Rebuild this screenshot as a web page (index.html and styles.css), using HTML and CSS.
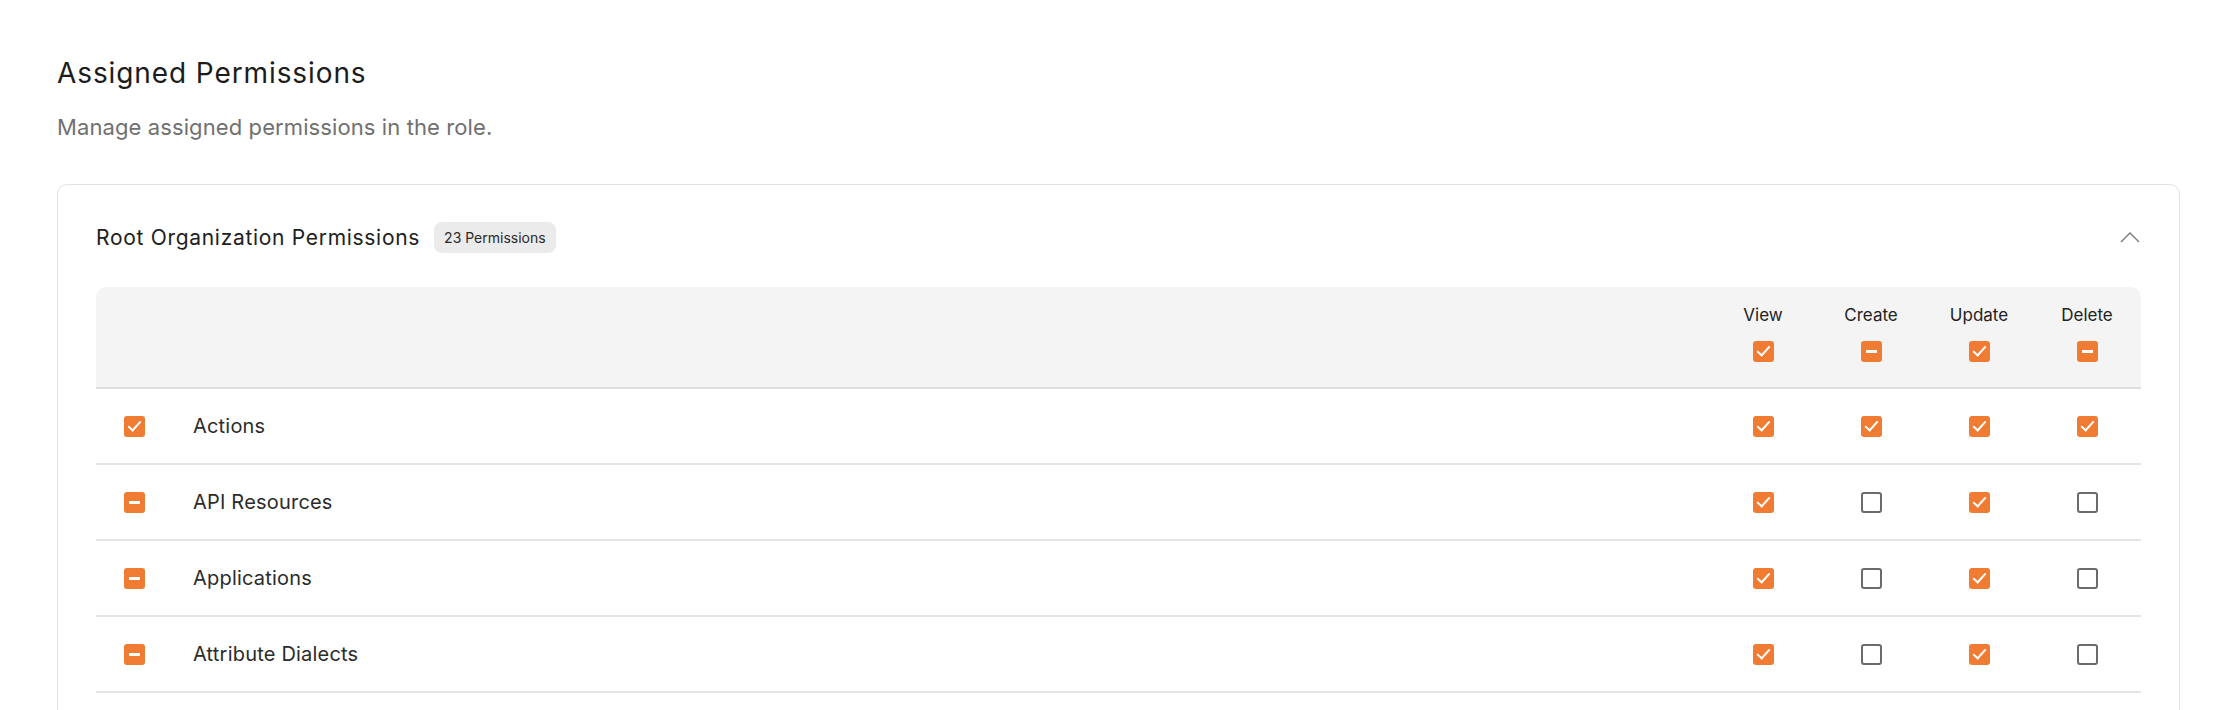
FILE: index.html
```html
<!DOCTYPE html>
<html lang="en">
<head>
<meta charset="utf-8">
<title>Assigned Permissions</title>
<link rel="stylesheet" href="styles.css">
</head>
<body>
<div class="page">
  <h1 class="title">Assigned Permissions</h1>
  <p class="subtitle">Manage assigned permissions in the role.</p>

  <section class="card">
    <div class="card-head">
      <div class="card-title">
        <span>Root Organization Permissions</span>
        <span class="badge">23 Permissions</span>
      </div>
      <svg class="chevron" width="20" height="12" viewBox="0 0 20 12"><path d="M1 11 L10 2 L19 11" fill="none" stroke="#777" stroke-width="1.3"/></svg>
    </div>

    <div class="table">
      <div class="thead">
        <div class="cell-select"></div>
        <div class="cell-name"></div>
        <div class="cell-col"><span class="col-label">View</span><span class="cb checked"></span></div>
        <div class="cell-col"><span class="col-label">Create</span><span class="cb partial"></span></div>
        <div class="cell-col"><span class="col-label">Update</span><span class="cb checked"></span></div>
        <div class="cell-col"><span class="col-label">Delete</span><span class="cb partial"></span></div>
      </div>

      <div class="row">
        <div class="cell-select"><span class="cb checked"></span></div>
        <div class="cell-name">Actions</div>
        <div class="cell-col"><span class="cb checked"></span></div>
        <div class="cell-col"><span class="cb checked"></span></div>
        <div class="cell-col"><span class="cb checked"></span></div>
        <div class="cell-col"><span class="cb checked"></span></div>
      </div>
      <div class="row">
        <div class="cell-select"><span class="cb partial"></span></div>
        <div class="cell-name">API Resources</div>
        <div class="cell-col"><span class="cb checked"></span></div>
        <div class="cell-col"><span class="cb"></span></div>
        <div class="cell-col"><span class="cb checked"></span></div>
        <div class="cell-col"><span class="cb"></span></div>
      </div>
      <div class="row">
        <div class="cell-select"><span class="cb partial"></span></div>
        <div class="cell-name">Applications</div>
        <div class="cell-col"><span class="cb checked"></span></div>
        <div class="cell-col"><span class="cb"></span></div>
        <div class="cell-col"><span class="cb checked"></span></div>
        <div class="cell-col"><span class="cb"></span></div>
      </div>
      <div class="row">
        <div class="cell-select"><span class="cb partial"></span></div>
        <div class="cell-name">Attribute Dialects</div>
        <div class="cell-col"><span class="cb checked"></span></div>
        <div class="cell-col"><span class="cb"></span></div>
        <div class="cell-col"><span class="cb checked"></span></div>
        <div class="cell-col"><span class="cb"></span></div>
      </div>
    </div>
  </section>
</div>
</body>
</html>
```

FILE: styles.css
```css
* { box-sizing: border-box; }
html, body { margin: 0; padding: 0; background: #fff; }
body {
  font-family: Inter, "Noto Sans", "Liberation Sans", sans-serif;
  color: #1f1f1f;
}
.page {
  height: 100vh;
  overflow: hidden;
  padding: 53px 57px 0;
}
.title {
  margin: 0;
  font-size: 28px;
  font-weight: 400;
  line-height: 40px;
  color: #1c1c1c;
  letter-spacing: 0.9px;
}
.subtitle {
  margin: 19px 0 0;
  font-size: 22px;
  line-height: 30px;
  color: #707070;
  letter-spacing: 0.1px;
}
.card {
  margin-top: 42px;
  border: 1px solid #e2e2e2;
  border-radius: 10px;
  padding: 0 38px 60px;
}
.card-head {
  height: 102px;
  display: flex;
  align-items: center;
  justify-content: space-between;
  padding-top: 2px;
}
.card-title {
  display: flex;
  align-items: center;
  gap: 14px;
  font-size: 21px;
  color: #202020;
  letter-spacing: 0.7px;
}
.badge {
  display: inline-flex;
  align-items: center;
  height: 31px;
  padding: 0 10px;
  border-radius: 8px;
  background: #ebebeb;
  font-size: 14px;
  color: #2a2a2a;
  letter-spacing: 0;
}
.chevron { margin-right: 1px; }
.table { display: flex; flex-direction: column; }
.thead, .row {
  display: grid;
  grid-template-columns: 97px 1fr repeat(4, 108px);
  align-items: center;
}
.thead {
  height: 102px;
  background: #f4f4f4;
  border-radius: 10px 10px 0 0;
  border-bottom: 2px solid #dedede;
  padding-bottom: 8px;
}
.row {
  height: 76px;
  border-bottom: 2px solid #e4e4e4;
}
.cell-select { display: flex; padding-left: 28px; }
.cell-name { font-size: 20px; color: #2b2b2b; letter-spacing: 0.2px; }
.cell-col {
  display: flex;
  flex-direction: column;
  align-items: center;
  gap: 16px;
}
.col-label {
  font-size: 17px;
  color: #222;
  line-height: 20px;
}
.cb {
  display: block;
  width: 21px;
  height: 21px;
  border-radius: 3px;
  border: 2.5px solid #6b6b6b;
  background: #fff;
  position: relative;
}
.cb.checked, .cb.partial {
  border: none;
  background: #f07b33;
}
.cb.checked::after {
  content: "";
  position: absolute;
  left: 7px;
  top: 2.5px;
  width: 5px;
  height: 11px;
  border: solid #fff;
  border-width: 0 2.4px 2.4px 0;
  transform: rotate(42deg);
}
.cb.partial::after {
  content: "";
  position: absolute;
  left: 5px;
  right: 5px;
  top: 9px;
  height: 3px;
  background: #fff;
}
```
